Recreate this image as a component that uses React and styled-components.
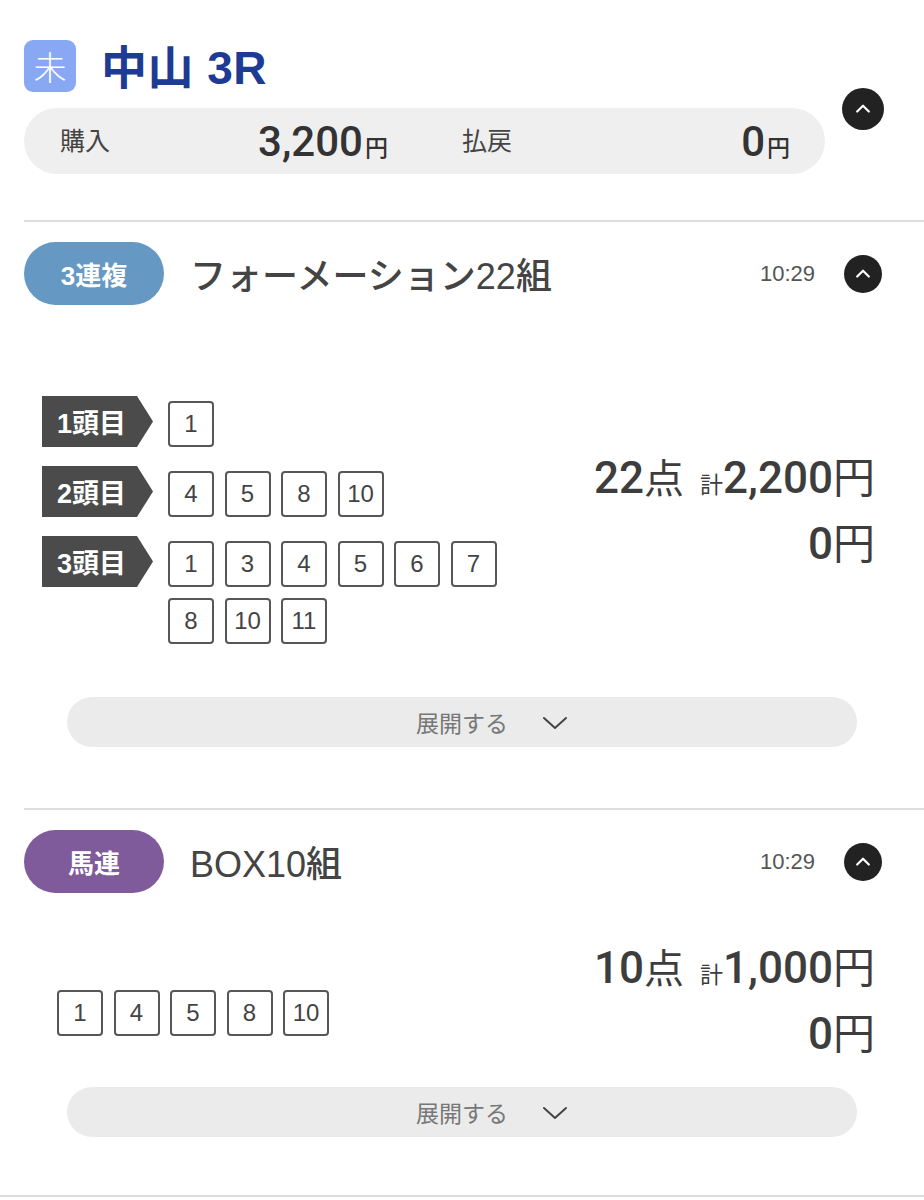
import React from "react";
import styled, { createGlobalStyle } from "styled-components";

const GlobalStyle = createGlobalStyle`
  html, body { margin: 0; padding: 0; background: #ffffff; }
  body {
    font-family: "Liberation Sans", "Noto Sans CJK JP", sans-serif;
    color: #333;
    -webkit-font-smoothing: antialiased;
  }
  * { box-sizing: border-box; }
`;

const Page = styled.div`
  width: 924px;
  display: flex;
  flex-direction: column;
`;

const RaceHeader = styled.header`
  display: flex;
  align-items: center;
  gap: 17px;
  padding: 40px 40px 0 24px;
`;

const RaceInfo = styled.div`
  flex: 1;
  display: flex;
  flex-direction: column;
  gap: 16px;
`;

const TitleRow = styled.div`
  display: flex;
  align-items: center;
  gap: 25px;
  height: 52px;
`;

const StatusBadge = styled.span`
  width: 52px;
  height: 52px;
  border-radius: 9px;
  background: #88a8f4;
  color: #fff;
  display: flex;
  align-items: center;
  justify-content: center;
  font-family: "Noto Sans CJK JP", sans-serif;
  font-size: 33px;
  font-weight: 300;
`;

const RaceTitle = styled.h1`
  margin: 0 0 4px;
  font-family: "Liberation Sans", "Noto Sans CJK JP", sans-serif;
  font-size: 46px;
  font-weight: 700;
  color: #1d3b93;
  letter-spacing: 0.5px;
`;

const SummaryPill = styled.div`
  height: 66px;
  border-radius: 33px;
  background: #efefef;
  display: grid;
  grid-template-columns: 1fr 1fr;
  column-gap: 74px;
  padding: 0 35px 0 36px;
  align-items: center;
`;

const SummaryItem = styled.div`
  display: flex;
  justify-content: space-between;
  align-items: center;
`;

const SummaryLabel = styled.span`
  font-family: "Noto Sans CJK JP", sans-serif;
  font-size: 25px;
  color: #444;
  margin-bottom: 4px;
`;

const SummaryValue = styled.span`
  font-family: "Roboto", "Liberation Sans", sans-serif;
  font-size: 42px;
  font-weight: 500;
  color: #333;
`;

const Yen = styled.span`
  font-family: "Noto Sans CJK JP", sans-serif;
  font-size: 23px;
  font-weight: 500;
  margin-left: 2px;
`;

const ToggleButton = styled.button`
  flex: none;
  width: ${(p) => p.$size}px;
  height: ${(p) => p.$size}px;
  border-radius: 50%;
  border: none;
  padding: 0;
  background: #222;
  display: flex;
  align-items: center;
  justify-content: center;
  margin-top: ${(p) => p.$offset || 0}px;
  cursor: pointer;
`;

const Divider = styled.hr`
  margin: ${(p) => p.$top}px 0 0 ${(p) => p.$left}px;
  border: none;
  height: 2px;
  background: #dddddd;
`;

const Section = styled.section`
  padding: 20px 0 ${(p) => p.$bottom}px;
  display: flex;
  flex-direction: column;
`;

const SectionHeader = styled.div`
  display: flex;
  align-items: center;
  padding: 0 42px 0 24px;
  height: 63px;
`;

const BetType = styled.span`
  width: 140px;
  height: 63px;
  border-radius: 32px;
  background: ${(p) => p.$color};
  color: #fff;
  display: flex;
  align-items: center;
  justify-content: center;
  font-family: "Liberation Sans", "Noto Sans CJK JP", sans-serif;
  font-size: 26px;
  font-weight: 700;
`;

const BetTitle = styled.span`
  margin-left: 26px;
  flex: 1;
  font-family: "Liberation Sans", "Noto Sans CJK JP", sans-serif;
  font-size: 36px;
  font-weight: 500;
  color: #444;
  margin-bottom: 2px;
`;

const Time = styled.span`
  font-family: "Liberation Sans", sans-serif;
  font-size: 22px;
  color: #555;
  margin-right: 29px;
`;

const Body = styled.div`
  display: flex;
  justify-content: space-between;
  align-items: flex-start;
  padding: ${(p) => p.$top}px 49px 0 ${(p) => p.$left}px;
`;

const Rows = styled.div`
  display: flex;
  flex-direction: column;
  gap: 19px;
`;

const Row = styled.div`
  display: flex;
  align-items: flex-start;
  gap: 15px;
`;

const PositionTag = styled.span`
  flex: none;
  width: 111px;
  height: 51px;
  background: #4b4b4b;
  color: #fff;
  clip-path: polygon(0 0, calc(100% - 16px) 0, 100% 50%, calc(100% - 16px) 100%, 0 100%);
  display: flex;
  align-items: center;
  padding-left: 15px;
  font-family: "Liberation Sans", "Noto Sans CJK JP", sans-serif;
  font-size: 27px;
  font-weight: 700;
`;

const Boxes = styled.div`
  display: flex;
  flex-wrap: wrap;
  gap: 11px 10.5px;
  width: ${(p) => p.$width || "auto"};
  margin-top: ${(p) => p.$top || 0}px;
`;

const NumBox = styled.span`
  width: 46px;
  height: 46px;
  border: 2px solid #575757;
  border-radius: 4px;
  display: flex;
  align-items: center;
  justify-content: center;
  font-family: "Liberation Sans", sans-serif;
  font-size: 24px;
  color: #444;
`;

const Totals = styled.div`
  display: flex;
  flex-direction: column;
  align-items: flex-end;
  margin-top: ${(p) => p.$top}px;
`;

const TotalLine = styled.div`
  height: 66px;
  line-height: 66px;
  font-family: "Roboto", "Liberation Sans", "Noto Sans CJK JP", sans-serif;
  font-size: 44px;
  font-weight: 500;
  color: #3d3d3d;
  white-space: nowrap;
`;

const Kanji = styled.span`
  font-family: "Noto Sans CJK JP", sans-serif;
  font-size: ${(p) => p.$size}px;
  font-weight: 400;
  margin: 0 ${(p) => p.$right || 0}px 0 ${(p) => p.$left || 0}px;
`;

const ExpandButton = styled.button`
  margin: ${(p) => p.$top}px 67px 0;
  height: 50px;
  border-radius: 25px;
  border: none;
  background: #ebebeb;
  display: flex;
  align-items: center;
  justify-content: center;
  font-family: "Noto Sans CJK JP", sans-serif;
  font-size: 23px;
  color: #777;
  padding: 0;
  cursor: pointer;
`;

const ExpandIcon = styled.span`
  display: flex;
  margin: 2px -60px 0 34px;
`;

const ChevronUp = () => (
  <svg width="20" height="20" viewBox="0 0 24 24" fill="none">
    <polyline points="5,15 12,8 19,15" stroke="#fff" strokeWidth="2.6" strokeLinecap="round" strokeLinejoin="round" />
  </svg>
);

const ChevronDown = () => (
  <svg width="26" height="16" viewBox="0 0 26 16" fill="none">
    <polyline points="2,3 13,13 24,3" stroke="#444" strokeWidth="2" strokeLinecap="round" strokeLinejoin="round" />
  </svg>
);

const formation = [
  { label: "1頭目", nums: [1] },
  { label: "2頭目", nums: [4, 5, 8, 10] },
  { label: "3頭目", nums: [1, 3, 4, 5, 6, 7, 8, 10, 11] },
];

const Amount = ({ points, total, top }) => (
  <Totals $top={top}>
    <TotalLine>
      {points}
      <Kanji $size={40} $right={16}>点</Kanji>
      <Kanji $size={23}>計</Kanji>
      {total}
      <Kanji $size={42}>円</Kanji>
    </TotalLine>
    <TotalLine>
      0<Kanji $size={42}>円</Kanji>
    </TotalLine>
  </Totals>
);

const Expand = ({ top }) => (
  <ExpandButton $top={top}>
    展開する
    <ExpandIcon>
      <ChevronDown />
    </ExpandIcon>
  </ExpandButton>
);

export default function App() {
  return (
    <Page>
      <GlobalStyle />
      <RaceHeader>
        <RaceInfo>
          <TitleRow>
            <StatusBadge>未</StatusBadge>
            <RaceTitle>中山 3R</RaceTitle>
          </TitleRow>
          <SummaryPill>
            <SummaryItem>
              <SummaryLabel>購入</SummaryLabel>
              <SummaryValue>
                3,200<Yen>円</Yen>
              </SummaryValue>
            </SummaryItem>
            <SummaryItem>
              <SummaryLabel>払戻</SummaryLabel>
              <SummaryValue>
                0<Yen>円</Yen>
              </SummaryValue>
            </SummaryItem>
          </SummaryPill>
        </RaceInfo>
        <ToggleButton $size={42} $offset={4} aria-label="閉じる">
          <ChevronUp />
        </ToggleButton>
      </RaceHeader>

      <Divider $top={46} $left={24} />

      <Section $bottom={61}>
        <SectionHeader>
          <BetType $color="#6598c2">3連複</BetType>
          <BetTitle>フォーメーション22組</BetTitle>
          <Time>10:29</Time>
          <ToggleButton $size={38} aria-label="閉じる">
            <ChevronUp />
          </ToggleButton>
        </SectionHeader>
        <Body $top={91} $left={42}>
          <Rows>
            {formation.map((r) => (
              <Row key={r.label}>
                <PositionTag>{r.label}</PositionTag>
                <Boxes $top={5} $width="340px">
                  {r.nums.map((n, i) => (
                    <NumBox key={i}>{n}</NumBox>
                  ))}
                </Boxes>
              </Row>
            ))}
          </Rows>
          <Amount points="22" total="2,200" top={46} />
        </Body>
        <Expand top={53} />
      </Section>

      <Divider $top={0} $left={24} />

      <Section $bottom={58}>
        <SectionHeader>
          <BetType $color="#7f5b9c">馬連</BetType>
          <BetTitle>BOX10組</BetTitle>
          <Time>10:29</Time>
          <ToggleButton $size={38} aria-label="閉じる">
            <ChevronUp />
          </ToggleButton>
        </SectionHeader>
        <Body $top={41} $left={57}>
          <Boxes $top={56}>
            {[1, 4, 5, 8, 10].map((n) => (
              <NumBox key={n}>{n}</NumBox>
            ))}
          </Boxes>
          <Amount points="10" total="1,000" top={-2} />
        </Body>
        <Expand top={23} />
      </Section>

      <Divider $top={0} $left={0} />
    </Page>
  );
}
